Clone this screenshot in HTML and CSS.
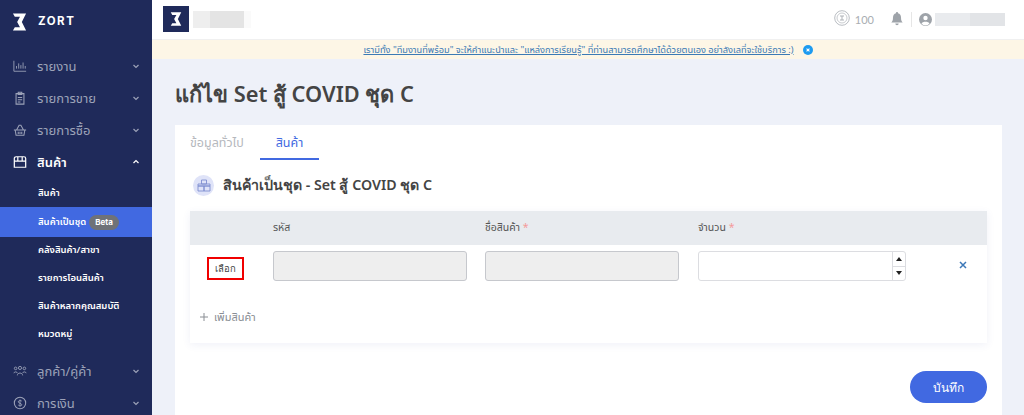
FILE: index.html
```html
<!DOCTYPE html>
<html lang="th">
<head>
<meta charset="utf-8">
<title>ZORT</title>
<link rel="stylesheet" href="styles.css">
</head>
<body>
<div class="app">
  <aside class="sidebar">
    <div class="brand">
      <svg class="brand-mark" width="15" height="20" viewBox="0 0 16 20"><path d="M1 1h14l-4.500 9 4.500 9H1l2-3.500h5.500l-3-5.500 3-5.500H3z" fill="#fff"/></svg>
      <span class="brand-name">ZORT</span>
    </div>
    <nav class="menu">
      <a class="item">
        <svg class="ico" viewBox="0 0 16 16"><path d="M1 2v12h14M4 11V8M6.500 11V5M9 11V7M11.500 11V4M14 11V8" fill="none" stroke="currentColor"/></svg>
        <span class="label">รายงาน</span>
        <svg class="chev" viewBox="0 0 8 8"><path d="M1.500 3 4 5.500 6.500 3" fill="none" stroke="currentColor" stroke-width="1.200"/></svg>
      </a>
      <a class="item">
        <svg class="ico" viewBox="0 0 16 16"><path d="M3.500 3h9v12h-9zM6 1.500h4V4H6zM5.500 7.500h5M5.500 10h5M5.500 12.500h3" fill="none" stroke="currentColor" stroke-width="1.200"/></svg>
        <span class="label">รายการขาย</span>
        <svg class="chev" viewBox="0 0 8 8"><path d="M1.500 3 4 5.500 6.500 3" fill="none" stroke="currentColor" stroke-width="1.200"/></svg>
      </a>
      <a class="item">
        <svg class="ico" viewBox="0 0 16 16"><path d="M1 8h14M2.500 8l1 6h9l1-6M4 8l3-5.500h2L12 8M6 10v2.500M8 10v2.500M10 10v2.500" fill="none" stroke="currentColor" stroke-width="1.200"/></svg>
        <span class="label">รายการซื้อ</span>
        <svg class="chev" viewBox="0 0 8 8"><path d="M1.500 3 4 5.500 6.500 3" fill="none" stroke="currentColor" stroke-width="1.200"/></svg>
      </a>
      <a class="item open">
        <svg class="ico" viewBox="0 0 16 16"><path d="M3.500 2h9a2 2 0 0 1 2 2v10h-13V4a2 2 0 0 1 2-2zM1.500 7h13M5.500 2v5M10.500 2v5" fill="none" stroke="currentColor" stroke-width="1.400"/></svg>
        <span class="label">สินค้า</span>
        <svg class="chev" viewBox="0 0 8 8"><path d="M1.500 5 4 2.500 6.500 5" fill="none" stroke="currentColor" stroke-width="1.200"/></svg>
      </a>
      <div class="submenu">
        <a class="sub">สินค้า</a>
        <a class="sub active">สินค้าเป็นชุด <span class="beta">Beta</span></a>
        <a class="sub">คลังสินค้า/สาขา</a>
        <a class="sub">รายการโอนสินค้า</a>
        <a class="sub">สินค้าหลากคุณสมบัติ</a>
        <a class="sub">หมวดหมู่</a>
      </div>
      <a class="item">
        <svg class="ico" viewBox="0 0 16 16"><g fill="none" stroke="currentColor"><circle cx="3" cy="5" r="1.500"/><circle cx="8" cy="4.500" r="1.800"/><circle cx="13" cy="5" r="1.500"/><path d="M1 10.500c0-2 4-2 4 0M5 13c0-3.500 6-3.500 6 0M11 10.500c0-2 4-2 4 0"/></g></svg>
        <span class="label">ลูกค้า/คู่ค้า</span>
        <svg class="chev" viewBox="0 0 8 8"><path d="M1.500 3 4 5.500 6.500 3" fill="none" stroke="currentColor" stroke-width="1.200"/></svg>
      </a>
      <a class="item">
        <svg class="ico" viewBox="0 0 16 16"><circle cx="8" cy="8" r="6.500" fill="none" stroke="currentColor" stroke-width="1.200"/><path d="M10 5.800C9 4.800 6 5 6 6.700S10 8.300 10 10 7 11.500 6 10.300M8 4v8" fill="none" stroke="currentColor"/></svg>
        <span class="label">การเงิน</span>
        <svg class="chev" viewBox="0 0 8 8"><path d="M1.500 3 4 5.500 6.500 3" fill="none" stroke="currentColor" stroke-width="1.200"/></svg>
      </a>
    </nav>
  </aside>
  <div class="main">
    <header class="topbar">
      <div class="company">
        <span class="company-logo"><svg width="12" height="16" viewBox="0 0 16 20"><path d="M1 1h14l-4.500 9 4.500 9H1l2-3.500h5.500l-3-5.500 3-5.500H3z" fill="#fff"/></svg></span>
        <span class="blur blur-company"></span>
      </div>
      <div class="top-right">
        <span class="coin"><svg width="16" height="16" viewBox="0 0 16 16"><circle cx="8" cy="8" r="7.300" fill="none" stroke="#b9bdc2"/><circle cx="8" cy="8" r="5" fill="none" stroke="#c9ccd0"/><path d="M6 5.500h4v1H8.500v3H10v1H6v-1h1.500v-3H6z" fill="#aeb2b7"/></svg></span>
        <span class="credit">100</span>
        <svg class="bell" width="12" height="14" viewBox="0 0 12 14"><path d="M6 0a1 1 0 0 1 1 1.200C9 1.700 10 3.300 10 5.500c0 3 .8 4 1.700 5H.3c.9-1 1.700-2 1.700-5 0-2.200 1-3.800 3-4.300A1 1 0 0 1 6 0zM4.300 11.500h3.400a1.700 1.700 0 0 1-3.400 0z" fill="#9ea3a9"/></svg>
        <span class="divider"></span>
        <svg width="13" height="13" viewBox="0 0 13 13"><circle cx="6.500" cy="6.500" r="6.500" fill="#9ea3a9"/><circle cx="6.500" cy="5" r="2.200" fill="#fff"/><path d="M2.500 10.500c1-2.500 7-2.500 8 0a5 5 0 0 1-8 0z" fill="#fff"/></svg>
        <span class="blur blur-user"></span>
      </div>
    </header>
    <div class="notice">
      <a class="notice-link">เรามีทั้ง "ทีมงานที่พร้อม" จะให้คำแนะนำและ "แหล่งการเรียนรู้" ที่ท่านสามารถศึกษาได้ด้วยตนเอง อย่าลังเลที่จะใช้บริการ :)</a>
      <span class="notice-close"><svg width="4" height="4" viewBox="0 0 5 5"><path d="M.7.7l3.600 3.600M4.300.7.700 4.300" stroke="#fff" stroke-width="1.300"/></svg></span>
    </div>
    <main class="content">
      <h1 class="page-title">แก้ไข Set สู้ COVID ชุด C</h1>
      <section class="card">
        <div class="tabs">
          <a class="tab">ข้อมูลทั่วไป</a>
          <a class="tab current">สินค้า</a>
        </div>
        <div class="section-head">
          <span class="section-icon"><svg width="14" height="13" viewBox="0 0 14 13"><path d="M4.500 1h5v4h-5zM1 7h6v5H1zM7 7h6v5H7zM1 5h12v2H1z" fill="none" stroke="#7f8fd0" stroke-width=".9"/></svg></span>
          <h2 class="section-title">สินค้าเป็นชุด - Set สู้ COVID ชุด C</h2>
        </div>
        <div class="panel">
          <div class="row head">
            <div></div>
            <div>รหัส</div>
            <div>ชื่อสินค้า <span class="req">*</span></div>
            <div>จำนวน <span class="req">*</span></div>
            <div></div>
          </div>
          <div class="row body">
            <div class="pick-cell"><button class="pick">เลือก</button></div>
            <div class="field disabled"></div>
            <div class="field disabled"></div>
            <div class="field number">
              <span class="spin"><span class="up"></span><span class="down"></span></span>
            </div>
            <div class="remove"><svg width="8" height="8" viewBox="0 0 8 8"><path d="M1 1l6 6M7 1 1 7" stroke="#3d78b8" stroke-width="1.500"/></svg></div>
          </div>
          <a class="add"><svg width="8" height="8" viewBox="0 0 8 8"><path d="M4 0v8M0 4h8" stroke="#8a8e94"/></svg> เพิ่มสินค้า</a>
        </div>
        <div class="actions"><button class="save">บันทึก</button></div>
      </section>
    </main>
  </div>
</div>
</body>
</html>
```

FILE: styles.css
```css
* { box-sizing: border-box; }
html, body { margin: 0; height: 415px; overflow: hidden; }
body { font-family: "Noto Sans", "Noto Sans Thai", "Open Sans", sans-serif; color: #444; background: #eef1f9; }
a { display: block; }
.app { display: flex; height: 415px; overflow: hidden; }

.sidebar { width: 152px; flex: none; background: #1f2a5a; color: #9ca2b8; overflow: hidden; }
.brand { display: flex; align-items: center; height: 43px; padding: 1px 0 0 12px; gap: 11px; }
.brand-name { color: #fff; font: 700 11.500px/1 "Inter", sans-serif; letter-spacing: 1.500px; }
.menu { padding-top: 7px; }
.item { display: flex; align-items: center; height: 32px; padding: 0 12px 0 13px; font-size: 13px; }
.ico { width: 14px; height: 14px; flex: none; }
.label { flex: 1; margin-left: 10px; line-height: 18px; }
.chev { width: 8px; height: 8px; flex: none; }
.item.open { color: #fff; font-weight: 600; }
.submenu { padding: 1px 0 7px; }
.sub { display: flex; align-items: center; height: 28px; padding-left: 38px; color: #fff; font-size: 9.500px; font-weight: 600; gap: 3px; }
.sub.active { height: 30px; margin-bottom: -1px; background: #4169e1; }
.beta { background: #6f7278; color: #fff; border-radius: 8px; padding: 0 6px; font: 700 8px/15px "Inter", sans-serif; }

.main { flex: 1; min-width: 0; display: flex; flex-direction: column; }
.topbar { height: 40px; flex: none; background: #fff; display: flex; justify-content: space-between; align-items: center; padding: 0 19px 1px 11px; border-bottom: 1px solid #f0f0f0; }
.company { display: flex; align-items: center; gap: 4px; }
.company-logo { width: 26px; height: 26px; background: #1f2a5a; display: flex; align-items: center; justify-content: center; }
.blur { display: block; height: 13px; }
.blur-company { width: 58px; height: 17px; background: linear-gradient(90deg, #eee 0 30%, #e4e4e4 30% 88%, #fafafa 88%); }
.top-right { display: flex; align-items: center; color: #a9adb2; font: 11px "Lato", sans-serif; }
.credit { margin: 0 17px 0 5px; }
.divider { width: 1px; height: 15px; background: #e6e6e6; margin: 0 7px 0 8px; }
.blur-user { width: 70px; margin-left: 3px; background: linear-gradient(90deg, #e9ebee 0 50%, #e2e4e7 50%); }

.notice { height: 19px; flex: none; background: #fdf6e6; display: flex; align-items: center; justify-content: center; gap: 9px; }
.notice-link { color: #3b7ab5; font-size: 9.210px; line-height: 14px; text-decoration: underline; }
.notice-close { width: 10px; height: 10px; border-radius: 50%; background: #1e9bf0; display: flex; align-items: center; justify-content: center; }

.content { flex: 1; padding: 0 22px 0 23px; min-height: 0; }
.page-title { margin: 16px 0 12px; font: 600 21.800px/38px "Noto Sans", sans-serif; color: #444; }
.card { background: #fff; padding: 0 15px; height: 300px; }
.tabs { display: flex; align-items: flex-end; height: 35px; }
.tab { color: #b5b8bd; font-size: 12.500px; line-height: 35px; height: 35px; width: 70px; white-space: nowrap; }
.tab.current { color: #4169e1; width: 59px; text-align: center; border-bottom: 2px solid #4169e1; }
.section-head { display: flex; align-items: center; gap: 9px; margin-top: 14px; height: 22px; padding-left: 3px; }
.section-icon { width: 21px; height: 21px; border-radius: 50%; background: #dfe3f8; display: flex; align-items: center; justify-content: center; }
.section-title { margin: 0; font: 600 14.200px "Noto Sans", sans-serif; color: #444; }
.panel { margin-top: 15px; height: 132px; box-shadow: 0 2px 8px rgba(60, 80, 160, .08); background: #fff; }
.row.head { display: grid; height: 34px; background: #e8ebef; font-size: 10.500px; align-items: center; color: #555; grid-template-columns: 83px 212px 213px 1fr 81px; }
.req { color: #f59a9a; }
.row.body { display: grid; height: 60px; padding-top: 6px; grid-template-columns: 64px 194px 194px 208px 1fr; column-gap: 18.500px; }
.pick-cell { padding: 4px 0 0 17px; }
.pick { width: 37px; height: 23px; border: 2px solid #f00000; background: #fff; font: 9.500px "Noto Sans", sans-serif; color: #444; padding: 0; }
.field { height: 30px; border-radius: 3px; border: 1px solid #cfd1d6; }
.field.disabled { background: #eeeeee; border-color: #c6c8cd; }
.field.number { background: #fff; border-color: #dcdde1; position: relative; }
.spin { position: absolute; right: 0; top: 0; bottom: 0; width: 13px; border-left: 1px solid #dcdde1; display: flex; flex-direction: column; }
.up, .down { flex: 1; display: flex; align-items: center; justify-content: center; }
.up { border-bottom: 1px solid #dcdde1; }
.up::before { content: ""; border: 3px solid transparent; border-bottom: 4px solid #222; border-top: 0; }
.down::before { content: ""; border: 3px solid transparent; border-top: 4px solid #222; border-bottom: 0; }
.remove { padding: 10px 0 0 35px; line-height: 0; }
.add { display: flex; align-items: center; gap: 6px; padding-left: 10px; margin-top: 2px; font-size: 11px; color: #8a8e94; height: 20px; }
.actions { display: flex; justify-content: flex-end; margin-top: 28px; }
.save { width: 77px; height: 32px; border-radius: 16px; border: 0; background: #4169e1; color: #fff; font: 500 12px "Noto Sans", sans-serif; }
```
